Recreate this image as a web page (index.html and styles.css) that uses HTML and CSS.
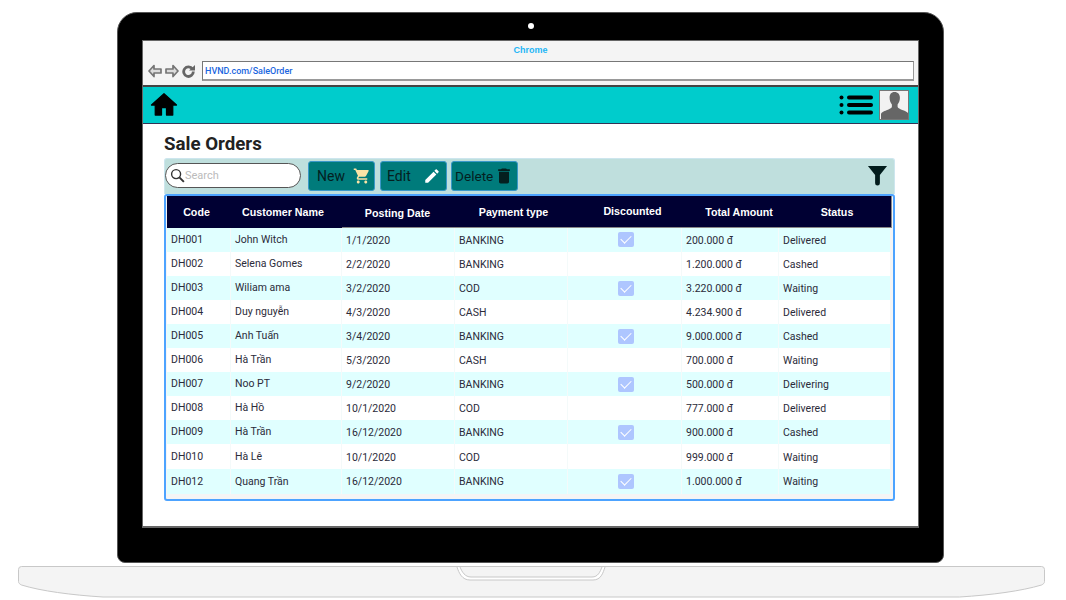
FILE: index.html
```html
<!DOCTYPE html>
<html lang="en">
<head>
    <meta charset="UTF-8">
    <meta name="viewport" content="width=device-width, initial-scale=1.0">
    <title>Sale Orders</title>
    <link rel="stylesheet" href="styles.css">
</head>
<body>
    <div class="laptop">
        <div class="camera"></div>
        <div class="screen">
            <div class="browser-bar">
                <div class="browser-title">Chrome</div>
                <div class="address-row">
                    <div class="nav-icons">
                        <svg width="14" height="14" viewBox="0 0 14 14"><path d="M6 1.500L1 7l5 5.500V9h7V5H6z" fill="#dcdcdc" stroke="#757575" stroke-width="1.700" stroke-linejoin="round"/></svg>
                        <svg width="14" height="14" viewBox="0 0 14 14"><path d="M8 1.500L13 7l-5 5.500V9H1V5h7z" fill="#dcdcdc" stroke="#757575" stroke-width="1.700" stroke-linejoin="round"/></svg>
                        <svg width="13" height="13" viewBox="0 0 13 13"><path d="M10.500 4A4.800 4.800 0 1 0 11.300 6.500" fill="none" stroke="#666" stroke-width="2.800"/><path d="M7 5.500h6V0z" fill="#666"/></svg>
                    </div>
                    <div class="address">HVND.com/SaleOrder</div>
                </div>
            </div>
            <div class="app-bar">
                <svg class="home-icon" width="30" height="30" viewBox="0 0 24 24"><path d="M10 20v-6h4v6h5v-8h3L12 3 2 12h3v8z" stroke="#000" stroke-width="1" stroke-linejoin="round"/></svg>
                <div class="app-actions">
                    <svg width="34" height="20" viewBox="0 0 34 20"><g fill="#000"><circle cx="2.500" cy="2.500" r="2"/><circle cx="2.500" cy="10" r="2"/><circle cx="2.500" cy="17.500" r="2"/><rect x="8" y="0.500" width="26" height="4" rx="2"/><rect x="8" y="8" width="26" height="4" rx="2"/><rect x="8" y="15.500" width="26" height="4" rx="2"/></g></svg>
                    <div class="avatar">
                        <svg width="27" height="28" viewBox="0 0 27 28"><path d="M13.500 1c3.400 0 5.400 2.400 5.400 5.800 0 2.600-.9 5-2.300 6.600v2.400c0 1.300 2.600 2.400 5.400 3.400 2.600 1 5.500 2 5.500 4.300V28H0v-4.500c0-2.300 2.900-3.300 5.500-4.300 2.800-1 5.400-2.100 5.400-3.400v-2.400C9.500 11.800 8.600 9.400 8.600 6.800 8.600 3.400 10.100 1 13.500 1z" fill="#666"/></svg>
                    </div>
                </div>
            </div>
            <div class="page">
                <h1>Sale Orders</h1>
                <div class="toolbar">
                    <div class="search">
                        <svg width="15" height="15" viewBox="0 0 16 16"><circle cx="6.500" cy="6.500" r="4.800" fill="none" stroke="#333" stroke-width="1.500"/><path d="M10 10l4.800 4.800" stroke="#333" stroke-width="2"/></svg>
                        <span>Search</span>
                    </div>
                    <button class="btn" type="button">New
                        <svg width="18" height="18" viewBox="0 0 24 24"><path fill="#fbe4a6" d="M7 18c-1.100 0-1.990.9-1.990 2S5.900 22 7 22s2-.9 2-2-.9-2-2-2zM1 2v2h2l3.600 7.590-1.350 2.450c-.16.28-.25.61-.25.96 0 1.100.9 2 2 2h12v-2H7.420c-.14 0-.25-.11-.25-.25l.03-.12.9-1.630h7.450c.75 0 1.410-.41 1.750-1.030l3.580-6.490c.08-.14.12-.31.12-.48 0-.55-.45-1-1-1H5.210l-.94-2H1zm16 16c-1.100 0-1.990.9-1.990 2s.89 2 1.990 2 2-.9 2-2-.9-2-2-2z"/></svg>
                    </button>
                    <button class="btn btn-edit" type="button">Edit
                        <svg width="18" height="18" viewBox="0 0 24 24"><path fill="#fff" d="M3 17.250V21h3.750L17.810 9.940l-3.750-3.750L3 17.250zM20.710 7.040c.39-.39.39-1.020 0-1.410l-2.340-2.340c-.39-.39-1.020-.39-1.410 0l-1.830 1.830 3.750 3.750 1.830-1.830z"/></svg>
                    </button>
                    <button class="btn btn-delete" type="button">Delete
                        <svg width="20" height="20" viewBox="0 0 24 24"><path fill="#04201f" d="M6 19c0 1.100.9 2 2 2h8c1.100 0 2-.9 2-2V7H6v12zM19 4h-3.500l-1-1h-5l-1 1H5v2h14V4z"/></svg>
                    </button>
                    <svg class="filter-icon" width="21" height="21" viewBox="0 0 22 22"><path d="M1 1h20l-7.500 9.500V19a2.500 2.500 0 0 1-5 0v-8.500z" fill="#021c1c"/></svg>
                </div>
                <div class="card">
                    <table class="orders">
                        <thead>
                            <tr>
                                <th class="h-code">Code</th>
                                <th class="h-name">Customer Name</th>
                                <th class="h-date">Posting Date</th>
                                <th class="h-pay">Payment type</th>
                                <th class="h-disc">Discounted</th>
                                <th class="h-total">Total Amount</th>
                                <th class="h-status">Status</th>
                            </tr>
                        </thead>
                        <tbody>
                            <tr><td class="up">DH001</td><td class="up">John Witch</td><td>1/1/2020</td><td>BANKING</td><td class="mid"><span class="check first"></span></td><td>200.000 đ</td><td>Delivered</td></tr>
                            <tr><td class="up">DH002</td><td class="up">Selena Gomes</td><td>2/2/2020</td><td>BANKING</td><td></td><td>1.200.000 đ</td><td>Cashed</td></tr>
                            <tr><td class="up">DH003</td><td class="up">Wiliam ama</td><td>3/2/2020</td><td>COD</td><td class="mid"><span class="check"></span></td><td>3.220.000 đ</td><td>Waiting</td></tr>
                            <tr><td class="up">DH004</td><td class="up">Duy nguyễn</td><td>4/3/2020</td><td>CASH</td><td></td><td>4.234.900 đ</td><td>Delivered</td></tr>
                            <tr><td class="up">DH005</td><td class="up">Anh Tuấn</td><td>3/4/2020</td><td>BANKING</td><td class="mid"><span class="check"></span></td><td>9.000.000 đ</td><td>Cashed</td></tr>
                            <tr><td class="up">DH006</td><td class="up">Hà Trần</td><td>5/3/2020</td><td>CASH</td><td></td><td>700.000 đ</td><td>Waiting</td></tr>
                            <tr><td class="up">DH007</td><td class="up">Noo PT</td><td>9/2/2020</td><td>BANKING</td><td class="mid"><span class="check"></span></td><td>500.000 đ</td><td>Delivering</td></tr>
                            <tr><td class="up">DH008</td><td class="up">Hà Hồ</td><td>10/1/2020</td><td>COD</td><td></td><td>777.000 đ</td><td>Delivered</td></tr>
                            <tr><td class="up">DH009</td><td class="up">Hà Trần</td><td>16/12/2020</td><td>BANKING</td><td class="mid"><span class="check nudge"></span></td><td>900.000 đ</td><td>Cashed</td></tr>
                            <tr class="tall shift"><td>DH010</td><td>Hà Lê</td><td>10/1/2020</td><td>COD</td><td></td><td>999.000 đ</td><td>Waiting</td></tr>
                            <tr class="tall"><td>DH012</td><td>Quang Trần</td><td>16/12/2020</td><td>BANKING</td><td class="mid"><span class="check nudge"></span></td><td>1.000.000 đ</td><td>Waiting</td></tr>
                        </tbody>
                    </table>
                </div>
            </div>
        </div>
    </div>
    <svg class="base" width="1027" height="32" viewBox="0 0 1027 32">
        <path d="M3.500.5h1020a3 3 0 0 1 3 3v12c0 1.500-1 2.500-3 3.500-20 6-50 10-82 12H85C53 29 23 25 3.500 19c-2-1-3-2-3-3.500v-12a3 3 0 0 1 3-3z" fill="#f4f4f4" stroke="#c8c8c8"/>
        <path d="M439 1c2 6 5 13 13 13h123c8 0 10-7 12-13" fill="#fff" stroke="#c8c8c8"/>
        <path d="M442 1c2 5 5 10 11 10h121c6 0 8-5 10-10" fill="#f4f4f4" stroke="#c8c8c8"/>
    </svg>
</body>
</html>
```
FILE: styles.css
```css
body {
    font-family: Roboto, "Liberation Sans", sans-serif;
    margin: 0;
    padding: 12px 0 0;
    background-color: #fff;
    overflow: hidden;
}

.laptop {
    width: 827px;
    height: 551px;
    margin-left: 117px;
    padding: 0 24px;
    box-sizing: border-box;
    background-color: #000;
    border: 1px solid #555;
    border-radius: 20px 20px 8px 8px;
}

.camera {
    width: 6px;
    height: 6px;
    margin: 10px auto 11px;
    background-color: #fff;
    border-radius: 50%;
}

.screen {
    height: 488px;
    background-color: #fff;
    border: 1px solid #666;
    border-bottom-width: 2px;
    box-sizing: border-box;
}

.browser-bar {
    height: 44px;
    background-color: #f4f4f4;
}

.browser-title {
    padding-top: 4px;
    height: 15px;
    text-align: center;
    font: bold 9px/11px "Liberation Sans", sans-serif;
    color: #1fb6f6;
}

.address-row {
    display: flex;
    align-items: center;
    height: 20px;
    padding-top: 1px;
}

.nav-icons {
    display: flex;
    align-items: center;
    gap: 3px;
    width: 59px;
    padding-left: 5px;
    box-sizing: border-box;
}

.address {
    width: 712px;
    height: 20px;
    box-sizing: border-box;
    padding-left: 2px;
    background-color: #fff;
    border: 1px solid #777;
    border-right-color: #999;
    border-bottom: 2px solid #999;
    font: 500 9px/18px Roboto, sans-serif;
    color: #1a66e0;
}

.app-bar {
    display: flex;
    justify-content: space-between;
    align-items: center;
    height: 39px;
    box-sizing: border-box;
    background-color: #00cccc;
    border-top: 2px solid #444;
    border-bottom: 1px solid #335;
}

.home-icon {
    margin-left: 6px;
}

.app-actions {
    display: flex;
    align-items: center;
    gap: 6px;
    margin-right: 9px;
}

.avatar {
    display: flex;
    justify-content: center;
    align-items: flex-end;
    width: 30px;
    height: 30px;
    box-sizing: border-box;
    background-color: #f2f2f2;
    border: 1px solid #777;
}

.page {
    padding: 0 23px 0 21px;
}

h1 {
    margin: 0;
    padding-top: 8px;
    height: 34px;
    box-sizing: border-box;
    font-size: 18.700px;
    line-height: 24px;
    font-weight: 700;
    color: #222;
}

.toolbar {
    display: flex;
    align-items: center;
    height: 36px;
    box-sizing: border-box;
    padding-bottom: 2px;
    background-color: #bfdfdd;
    border: 1px solid #cde6ee;
    border-bottom: none;
    border-radius: 3px 3px 0 0;
}

.search {
    display: flex;
    align-items: center;
    gap: 0;
    width: 136px;
    height: 25px;
    box-sizing: border-box;
    padding-left: 4px;
    margin-right: 7px;
    background-color: #fff;
    border: 1px solid #555;
    border-radius: 13px;
    font-size: 11px;
    color: #bbb;
}

.btn {
    display: flex;
    justify-content: space-between;
    align-items: center;
    width: 67px;
    height: 30px;
    padding: 0 3px 0 8px;
    margin-right: 5px;
    box-sizing: border-box;
    background-color: #007b7b;
    border: 1px solid #3a98c8;
    border-radius: 3px;
    font-family: Roboto, sans-serif;
    font-size: 14px;
    color: #04201f;
}

.btn-edit {
    margin-right: 4px;
    padding-left: 6px;
    padding-right: 5px;
}

.btn-delete {
    padding: 0 3px 0 3px;
    font-size: 13.600px;
}

.filter-icon {
    margin-left: auto;
    margin-right: 6px;
}

.card {
    height: 307px;
    box-sizing: border-box;
    padding: 0 1px 6px;
    background-color: #f5f5f5;
    border: 2px solid #4da3ff;
    border-radius: 3px;
}

.orders {
    width: 725px;
    table-layout: fixed;
    border-collapse: separate;
    border-spacing: 0;
    font-size: 10.500px;
    color: #2b2b3a;
}

.orders th {
    height: 32px;
    padding: 0;
    box-sizing: border-box;
    background-color: #000033;
    font: bold 10.700px "Liberation Sans", sans-serif;
    color: #fff;
    text-align: center;
}

.orders .h-code { width: 64px; padding-right: 5px; }
.orders .h-name { width: 111px; padding-right: 7px; }
.orders .h-date { width: 113px; padding: 3px 2px 0 0; border-bottom: 1px solid #888; }
.orders .h-pay { width: 113px; padding-left: 4px; border-bottom: 1px solid #888; }
.orders .h-disc { width: 114px; padding: 0 0 2px 15px; border-bottom: 1px solid #888; }
.orders .h-total { width: 97px; padding-left: 17px; border-bottom: 1px solid #888; }
.orders .h-status { width: 113px; padding-left: 4px; border-bottom: 1px solid #888; border-right: 1px solid #888; }

.orders td {
    height: 24px;
    padding: 0 0 0 4px;
    box-sizing: border-box;
    border-right: 1px solid #f4fafa;
    white-space: nowrap;
}

.orders td:last-child {
    border-right: 2px solid #f5f5f5;
}

.orders tbody tr:nth-child(odd) td {
    background-color: #e0ffff;
}

.orders tbody tr:nth-child(even) td {
    background-color: #fff;
}

.orders .tall td {
    height: 25px;
}

.orders .shift td:nth-child(n+3) {
    padding-top: 2px;
}

.orders .up {
    padding-bottom: 2px;
}

.orders .mid {
    padding: 0 0 0 2px;
    text-align: center;
}

.check {
    display: flex;
    justify-content: center;
    align-items: center;
    width: 16px;
    height: 15px;
    margin: 1px auto 0;
    background-color: #aec6ff;
    border-radius: 2px;
}

.check::after {
    content: "";
    width: 9px;
    height: 5px;
    margin-top: -3px;
    border-left: 1.500px solid #fff;
    border-bottom: 1.500px solid #fff;
    transform: rotate(-45deg);
}

.check.first {
    margin-top: -2px;
}

.check.nudge {
    margin-top: 0;
}

.base {
    display: block;
    margin: 3px 0 0 18px;
}
```
